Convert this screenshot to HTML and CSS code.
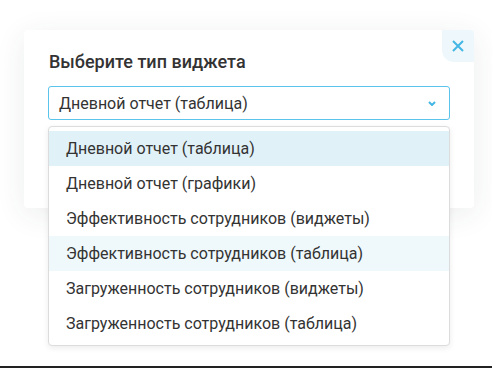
FILE: index.html
```html
<!DOCTYPE html>
<html lang="ru">
<head>
<meta charset="utf-8">
<link rel="stylesheet" href="styles.css">
</head>
<body>
<div class="stage">
  <div class="modal">
    <button class="close" aria-label="Закрыть">
      <svg width="12" height="12" viewBox="0 0 12 12"><path d="M1 1L11 11M11 1L1 11" stroke="#43b6e4" stroke-width="2" fill="none"/></svg>
    </button>
    <h2 class="title">Выберите тип виджета</h2>
    <div class="select">
      <span class="select-value">Дневной отчет (таблица)</span>
      <svg class="chevron" width="8" height="5" viewBox="0 0 8 5"><path d="M1 1L4 4L7 1" stroke="#43b6e4" stroke-width="2" fill="none"/></svg>
    </div>
  </div>
  <ul class="dropdown">
    <li class="item selected">Дневной отчет (таблица)</li>
    <li class="item">Дневной отчет (графики)</li>
    <li class="item">Эффективность сотрудников (виджеты)</li>
    <li class="item hover">Эффективность сотрудников (таблица)</li>
    <li class="item">Загруженность сотрудников (виджеты)</li>
    <li class="item">Загруженность сотрудников (таблица)</li>
  </ul>
  <div class="bottom-bar"></div>
</div>
</body>
</html>
```
FILE: styles.css
```css
* { box-sizing: border-box; }
html, body { margin: 0; padding: 0; background: #fff; }
body { font-family: Roboto, "Noto Sans", sans-serif; color: #333; }
.stage {
  position: relative;
  width: 492px;
  height: 368px;
  padding-top: 30px;
  display: flex;
  flex-direction: column;
  overflow: hidden;
}
.modal {
  position: relative;
  margin-left: 24px;
  width: 450px;
  height: 178px;
  background: #fff;
  border-radius: 4px;
  box-shadow: 0 6px 30px rgba(40, 50, 70, 0.09);
  padding: 19px 24px 0 24px;
}
.close {
  position: absolute;
  top: 0;
  right: 0;
  width: 32px;
  height: 32px;
  border: 0;
  padding: 0;
  background: #eef8fc;
  border-radius: 0 4px 0 12px;
  display: flex;
  align-items: center;
  justify-content: center;
}
.title {
  margin: 0 0 12px 1px;
  font-size: 18px;
  font-weight: 500;
  line-height: 25px;
  color: #333;
}
.select {
  height: 34px;
  border: 1px solid #5bc4ea;
  border-radius: 3px;
  display: flex;
  align-items: center;
  justify-content: space-between;
  padding: 0 13px 0 10px;
  font-size: 16px;
}
.chevron { display: block; }
.dropdown {
  position: absolute;
  top: 126px;
  left: 48px;
  width: 402px;
  margin: 0;
  padding: 4px 0;
  list-style: none;
  background: #fff;
  border: 1px solid #dcdcdc;
  border-radius: 4px;
  box-shadow: 0 2px 6px rgba(0, 0, 0, 0.08);
}
.item {
  height: 35px;
  line-height: 35px;
  padding-left: 17px;
  font-size: 16px;
  color: #333;
}
.item.selected { background: #e1f1f8; }
.item.hover { background: #eff8fb; }
.bottom-bar {
  position: absolute;
  left: 0;
  right: 0;
  bottom: 0;
  height: 2px;
  background: #222;
}
```
